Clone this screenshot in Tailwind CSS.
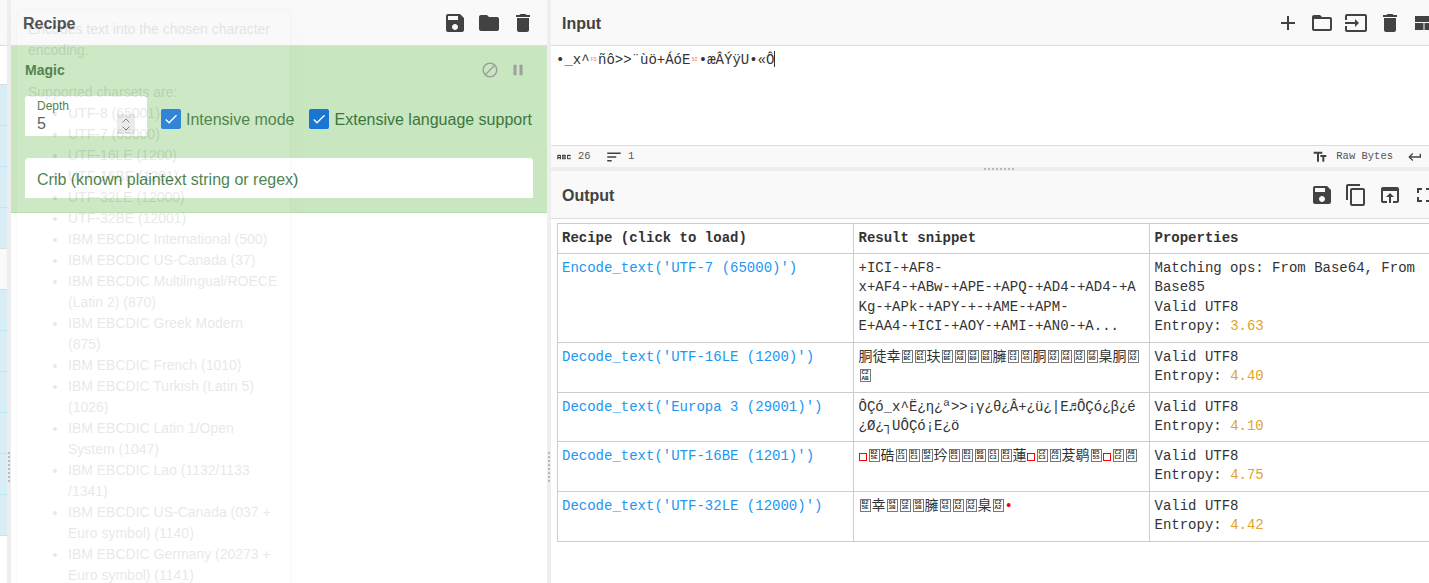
<!DOCTYPE html>
<html lang="en">
<head>
  <meta charset="UTF-8" />
  <title>CyberChef</title>
  <script src="https://cdn.jsdelivr.net/npm/@tailwindcss/browser@4"></script>
</head>
<body class="h-[583px] w-[1429px] overflow-hidden relative bg-white text-[#424242] font-['Liberation_Sans',sans-serif]">

  <div class="flex h-[583px]">

    <!-- operations column, almost fully collapsed -->
    <div class="w-[7px] shrink-0 overflow-hidden">
      <div class="h-[46px] bg-[#f9f9f9] border-b border-[#ddd]"></div>
      <div class="h-[39px] bg-white border-b border-[#ddd]"></div>
      <div class="h-[41px] bg-[#d9edf7] border-b border-[#bce8f1]"></div>
      <div class="h-[41px] bg-[#d9edf7] border-b border-[#bce8f1]"></div>
      <div class="h-[41px] bg-[#d9edf7] border-b border-[#bce8f1]"></div>
      <div class="h-[41px] bg-[#d9edf7] border-b border-[#ddd]"></div>
      <div class="h-[41px] bg-[#f9f9f9] border-b border-[#ddd]"></div>
      <div class="h-[41px] bg-[#d9edf7] border-b border-[#bce8f1]"></div>
      <div class="h-[41px] bg-[#d9edf7] border-b border-[#bce8f1]"></div>
      <div class="h-[41px] bg-[#d9edf7] border-b border-[#bce8f1]"></div>
      <div class="h-[41px] bg-[#d9edf7] border-b border-[#bce8f1]"></div>
      <div class="h-[41px] bg-[#d9edf7] border-b border-[#bce8f1]"></div>
      <div class="h-[41px] bg-[#d9edf7] border-b border-[#bce8f1]"></div>
    </div>

    <div class="w-[4px] shrink-0 bg-[#eeeeee] flex items-start justify-center pt-[452px]">
      <div class="w-[2px] h-[30px] bg-[repeating-linear-gradient(180deg,#bbb_0,#bbb_2px,transparent_2px,transparent_4px)]"></div>
    </div>

    <!-- recipe -->
    <div class="w-[536px] shrink-0 flex flex-col">
      <div class="h-[46px] shrink-0 bg-[#f9f9f9] border-b border-[#ddd] flex items-center pl-3 pr-[7px]">
        <span class="text-base font-bold mt-[2px]">Recipe</span>
        <div class="ml-auto flex">
          <button class="w-[34px] flex justify-center"><svg class="w-6 h-6 fill-[#424242]" viewBox="0 0 24 24"><path d="M17 3H5c-1.11 0-2 .9-2 2v14c0 1.1.89 2 2 2h14c1.1 0 2-.9 2-2V7l-4-4zm-5 16c-1.66 0-3-1.34-3-3s1.34-3 3-3 3 1.34 3 3-1.34 3-3 3zm3-10H5V5h10v4z"/></svg></button>
          <button class="w-[34px] flex justify-center"><svg class="w-6 h-6 fill-[#424242]" viewBox="0 0 24 24"><path d="M10 4H4c-1.1 0-1.99.9-1.99 2L2 18c0 1.1.9 2 2 2h16c1.1 0 2-.9 2-2V8c0-1.1-.9-2-2-2h-8l-2-2z"/></svg></button>
          <button class="w-[34px] flex justify-center"><svg class="w-6 h-6 fill-[#424242]" viewBox="0 0 24 24"><path d="M6 19c0 1.1.9 2 2 2h8c1.1 0 2-.9 2-2V7H6v12zM19 4h-3.5l-1-1h-5l-1 1H5v2h14V4z"/></svg></button>
        </div>
      </div>

      <div class="h-[167px] shrink-0 bg-[#c8e6bf] border-b border-[#b5dca8] pl-[14px] pr-[14px] text-[#3c763d]">
        <div class="flex items-center h-[50px] pb-[2px]">
          <span class="text-sm font-bold">Magic</span>
          <div class="ml-auto flex items-center gap-[10px] pr-[6px]">
            <svg class="w-[18px] h-[18px] fill-[#9e9e9e]" viewBox="0 0 24 24"><path d="M12 2C6.48 2 2 6.48 2 12s4.48 10 10 10 10-4.48 10-10S17.52 2 12 2zM4 12c0-4.42 3.58-8 8-8 1.85 0 3.55.63 4.9 1.69L5.69 16.9C4.63 15.55 4 13.85 4 12zm8 8c-1.85 0-3.55-.63-4.9-1.69L18.31 7.1C19.37 8.45 20 10.15 20 12c0 4.42-3.58 8-8 8z"/></svg>
            <svg class="w-[18px] h-[18px] fill-[#9e9e9e]" viewBox="0 0 24 24"><path d="M6 19h4V5H6v14zm8-14v14h4V5h-4z"/></svg>
          </div>
        </div>

        <div class="flex items-center h-[40px]">
          <div class="relative w-[122px] h-[40px] bg-white rounded-t-[3px] pl-3">
            <div class="text-xs leading-none pt-[4px]">Depth</div>
            <div class="text-base leading-none pt-[4px] text-[#495057]">5</div>
            <div class="absolute left-[92px] top-[18px] w-[18px] h-[20px] bg-[#e9e9ed] flex flex-col items-center justify-center gap-[1px]">
              <svg class="w-[10px] h-[7px] stroke-[#777] fill-none" viewBox="0 0 10 7"><path d="M1.5 5.5 5 2l3.5 3.5"/></svg>
              <svg class="w-[10px] h-[7px] stroke-[#777] fill-none" viewBox="0 0 10 7"><path d="M1.5 1.5 5 5l3.5-3.5"/></svg>
            </div>
          </div>
          <div class="ml-[14px] mt-[6px] w-5 h-5 rounded-[2px] bg-[#1976d2] flex items-center justify-center">
            <svg class="w-4 h-4 fill-white" viewBox="0 0 24 24"><path d="M9 16.2 4.8 12l-1.4 1.4L9 19 21 7l-1.4-1.4z"/></svg>
          </div>
          <span class="ml-[5px] mt-[7px] text-base">Intensive mode</span>
          <div class="ml-[14px] mt-[6px] w-5 h-5 rounded-[2px] bg-[#1976d2] flex items-center justify-center">
            <svg class="w-4 h-4 fill-white" viewBox="0 0 24 24"><path d="M9 16.2 4.8 12l-1.4 1.4L9 19 21 7l-1.4-1.4z"/></svg>
          </div>
          <span class="ml-[6px] mt-[7px] text-base">Extensive language support</span>
        </div>

        <div class="mt-[22px] h-[40px] bg-white rounded-t-[4px] pl-3 pt-[3px] flex items-center text-base">Crib (known plaintext string or regex)</div>
      </div>

      <div class="flex-1 bg-white"></div>
    </div>

    <div class="w-[4px] shrink-0 bg-[#eeeeee] flex items-start justify-center pt-[452px]">
      <div class="w-[2px] h-[30px] bg-[repeating-linear-gradient(180deg,#bbb_0,#bbb_2px,transparent_2px,transparent_4px)]"></div>
    </div>

    <!-- input / output -->
    <div class="flex-1 min-w-0 flex flex-col overflow-hidden">
      <div class="h-[46px] shrink-0 bg-[#f9f9f9] border-b border-[#ddd] flex items-center pl-[11px]">
        <span class="text-base font-bold mt-[2px]">Input</span>
        <div class="ml-auto flex mr-[-12px]">
          <button class="w-[34px] flex justify-center"><svg class="w-6 h-6 fill-[#424242]" viewBox="0 0 24 24"><path d="M19 13h-6v6h-2v-6H5v-2h6V5h2v6h6v2z"/></svg></button>
          <button class="w-[34px] flex justify-center"><svg class="w-6 h-6 fill-[#424242]" viewBox="0 0 24 24"><path d="M20 6h-8l-2-2H4c-1.1 0-1.99.9-1.99 2L2 18c0 1.1.9 2 2 2h16c1.1 0 2-.9 2-2V8c0-1.1-.9-2-2-2zm0 12H4V8h16v10z"/></svg></button>
          <button class="w-[34px] flex justify-center"><svg class="w-6 h-6 fill-[#424242]" viewBox="0 0 24 24"><path d="M21 3.01H3c-1.1 0-2 .9-2 2V9h2V4.99h18v14.03H3V15H1v4.01c0 1.1.9 1.98 2 1.98h18c1.1 0 2-.88 2-1.98v-14c0-1.11-.9-2-2-2zM11 16l4-4-4-4v3H1v2h10v3z"/></svg></button>
          <button class="w-[34px] flex justify-center"><svg class="w-6 h-6 fill-[#424242]" viewBox="0 0 24 24"><path d="M6 19c0 1.1.9 2 2 2h8c1.1 0 2-.9 2-2V7H6v12zM19 4h-3.5l-1-1h-5l-1 1H5v2h14V4z"/></svg></button>
          <button class="w-[34px] flex justify-center"><svg class="w-6 h-6 fill-[#424242]" viewBox="0 0 24 24"><path d="M3 5h18v6H3zM3 12h8.500v7H3zM12.500 12H21v7h-8.500z"/></svg></button>
        </div>
      </div>

      <div class="h-[99px] shrink-0 pl-[5px] pt-[5px] text-sm leading-[19px] font-['Liberation_Mono',monospace] text-[#333] whitespace-pre flex items-start"><span>•_x^</span><span class="inline-block w-[8.4px] text-[5px] text-center text-[#f77]">FS</span><span>ñô&gt;&gt;¨ùö+ÁóE</span><span class="inline-block w-[8.4px] text-[5px] text-center text-[#f77]">SO</span><span>•æÂÝÿU•«Ô</span><span class="w-px h-[16px] bg-[#333]"></span></div>

      <div class="h-[22px] shrink-0 bg-[#f9f9f9] border-t border-[#ddd] flex items-center pl-[4px] text-[10.5px] text-[#555] font-['Liberation_Mono',monospace]">
        <svg class="w-[18px] h-[18px] fill-[#424242]" viewBox="0 0 24 24"><path d="M21 11h-1.500v-.5h-2v3h2V13H21v1c0 .55-.45 1-1 1h-3c-.55 0-1-.45-1-1v-4c0-.55.45-1 1-1h3c.55 0 1 .45 1 1v1zM8 10v5H6.500v-1.500h-2V15H3v-5c0-.55.45-1 1-1h3c.55 0 1 .45 1 1zm-1.500.5h-2V12h2v-1.500zm7 1.500c.55 0 1 .45 1 1v1c0 .55-.45 1-1 1h-4V9h4c.55 0 1 .45 1 1v1c0 .55-.45 1-1 1zM11 10.500v.75h2v-.75h-2zm2 2.250h-2v.75h2v-.75z"/></svg>
        <span class="ml-[5px] w-[13px]">26</span>
        <svg class="ml-[14px] w-[18px] h-[18px] fill-[#424242]" viewBox="0 0 24 24"><path d="M3 18h6v-2H3v2zM3 6v2h18V6H3zm0 7h12v-2H3v2z"/></svg>
        <span class="ml-[5px]">1</span>
        <svg class="ml-auto w-4 h-4 fill-[#424242]" viewBox="0 0 24 24"><path d="M2.500 4v3h5v12h3V7h5V4h-13zm19 5h-9v3h3v7h3v-7h3V9z"/></svg>
        <span class="ml-[8px]">Raw Bytes</span>
        <svg class="ml-[14px] mr-[6px] w-4 h-4 fill-[#424242]" viewBox="0 0 24 24"><path d="M19 7v4H5.830l3.580-3.590L8 6l-6 6 6 6 1.410-1.410L5.830 13H21V7z"/></svg>
      </div>

      <div class="h-[4px] shrink-0 bg-[#eeeeee] flex items-center justify-center">
        <div class="w-[30px] h-[2px] ml-[18px] bg-[repeating-linear-gradient(90deg,#bbb_0,#bbb_2px,transparent_2px,transparent_4px)]"></div>
      </div>

      <div class="h-[48px] shrink-0 bg-[#f9f9f9] border-b border-[#ddd] flex items-center pl-[11px]">
        <span class="text-base font-bold mt-[2px]">Output</span>
        <div class="ml-auto flex mr-[-12px]">
          <button class="w-[34px] flex justify-center"><svg class="w-6 h-6 fill-[#424242]" viewBox="0 0 24 24"><path d="M17 3H5c-1.11 0-2 .9-2 2v14c0 1.1.89 2 2 2h14c1.1 0 2-.9 2-2V7l-4-4zm-5 16c-1.660 0-3-1.340-3-3s1.340-3 3-3 3 1.340 3 3-1.340 3-3 3zm3-10H5V5h10v4z"/></svg></button>
          <button class="w-[34px] flex justify-center"><svg class="w-6 h-6 fill-[#424242]" viewBox="0 0 24 24"><path d="M16 1H4c-1.100 0-2 .9-2 2v14h2V3h12V1zm3 4H8c-1.100 0-2 .9-2 2v14c0 1.100.9 2 2 2h11c1.100 0 2-.9 2-2V7c0-1.100-.9-2-2-2zm0 16H8V7h11v14z"/></svg></button>
          <button class="w-[34px] flex justify-center"><svg class="w-6 h-6 fill-[#424242]" viewBox="0 0 24 24"><path d="M19 4H5c-1.110 0-2 .9-2 2v12c0 1.100.89 2 2 2h4v-2H5V8h14v10h-4v2h4c1.100 0 2-.9 2-2V6c0-1.100-.89-2-2-2zm-7 6l-4 4h3v6h2v-6h3l-4-4z"/></svg></button>
          <button class="w-[34px] flex justify-center"><svg class="w-6 h-6 fill-[#424242]" viewBox="0 0 24 24"><path d="M7 14H5v5h5v-2H7v-3zm-2-4h2V7h3V5H5v5zm12 7h-3v2h5v-5h-2v3zM14 5v2h3v3h2V5h-5z"/></svg></button>
        </div>
      </div>

      <div class="flex-1 pl-[6px] pt-[4px] overflow-hidden">
        <table class="w-[889px] table-fixed border-collapse text-sm leading-[19.5px] text-[#333] font-['Liberation_Mono','Noto_Sans_CJK_SC',monospace] [&_td]:border [&_td]:border-[#ccc] [&_td]:px-[4.500px] [&_td]:py-[5px] [&_td]:align-top [&_td:first-child]:pl-[4px] [&_th]:border [&_th]:border-[#ccc] [&_th]:px-[4.500px] [&_th]:py-[4.500px] [&_th:first-child]:pl-[4px] [&_th]:text-left [&_a]:text-[#2196f3] [&_b]:font-normal [&_b]:text-[#e0a526] [&_i]:inline-block [&_i]:not-italic [&_i]:font-bold [&_i]:w-[11px] [&_i]:h-[13px] [&_i]:mx-px [&_i]:border [&_i]:border-[#777] [&_i]:text-[6px] [&_i]:leading-[5.500px] [&_i]:text-center [&_i]:align-[-2px] [&_i]:overflow-hidden [&_u]:inline-block [&_u]:no-underline [&_u]:w-[8px] [&_u]:h-[8px] [&_u]:mr-[1px] [&_u]:border [&_u]:border-[#f00] [&_u]:align-[-1px]">
          <thead>
            <tr><th>Recipe (click to load)</th><th>Result snippet</th><th>Properties</th></tr>
          </thead>
          <tbody>
            <tr>
              <td><a>Encode_text('UTF-7 (65000)')</a></td>
              <td>+ICI-+AF8-<br>x+AF4-+ABw-+APE-+APQ-+AD4-+AD4-+A<br>Kg-+APk-+APY-+-+AME-+APM-<br>E+AA4-+ICI-+AOY-+AMI-+AN0-+A...</td>
              <td>Matching ops: From Base64, From Base85<br>Valid UTF8<br>Entropy: <b>3.63</b></td>
            </tr>
            <tr>
              <td><a>Decode_text('UTF-16LE (1200)')</a></td>
              <td>胴徒幸<i>C2<br>BC</i><i>C2<br>B1</i>玞<i>C2<br>BE</i><i>C2<br>A8</i><i>C3<br>B9</i><i>C2<br>B8</i>臃<i>C3<br>C3</i><i>C2<br>45</i>胴<i>C2<br>A2</i><i>C2<br>A6</i><i>C2<br>A2</i><i>C2<br>9D</i>臬胴<i>C2<br>A2</i><br><i>C2<br>AB</i></td>
              <td>Valid UTF8<br>Entropy: <b>4.40</b></td>
            </tr>
            <tr class="[&>td]:pb-[4px]!">
              <td><a>Decode_text('Europa 3 (29001)')</a></td>
              <td>ÔÇó_x^Ë¿η¿ª&gt;&gt;¡γ¿θ¿Â+¿ü¿|E♬ÔÇó¿β¿é<br>¿Ø¿┐UÔÇó¡E¿ö</td>
              <td>Valid UTF8<br>Entropy: <b>4.10</b></td>
            </tr>
            <tr>
              <td><a>Decode_text('UTF-16BE (1201)')</a></td>
              <td><u></u><i>B2<br>5E</i>硞<i>1C<br>C3</i><i>B1<br>C3</i><i>B4<br>3E</i>玪<i>B8<br>C3</i><i>B3<br>C3</i><i>B6<br>2B</i><i>C1<br>C3</i><i>B3<br>C3</i>蓮<u></u><i>C2<br>C3</i><i>A6<br>C3</i>茇鹖<i>B5<br>55</i><u></u><i>C2<br>C2</i><i>AB<br>C3</i></td>
              <td>Valid UTF8<br>Entropy: <b>4.75</b></td>
            </tr>
            <tr>
              <td><a>Decode_text('UTF-32LE (12000)')</a></td>
              <td><i>B2<br>5E</i>幸<i>04<br>3B</i><i>C2<br>3E</i><i>06<br>3B</i>臃<i>C3<br>45</i><i>C2<br>A2</i><i>C2<br>A2</i>臬<i>C2<br>A2</i><span class="text-[#f00]">•</span></td>
              <td>Valid UTF8<br>Entropy: <b>4.42</b></td>
            </tr>
          </tbody>
        </table>
      </div>
    </div>
  </div>

  <!-- fading help popover that lies over the recipe panel -->
  <div class="absolute left-[16px] top-[9px] w-[275px] h-[640px] bg-white border border-black/20 rounded-[5px] opacity-[.1] shadow-lg px-[11px] pt-[9px] text-sm leading-[21px] text-[#212529]">
    <p>Encodes text into the chosen character encoding.</p>
    <p class="mt-[21px]">Supported charsets are:</p>
    <ul class="list-disc pl-10">
      <li>UTF-8 (65001)</li>
      <li>UTF-7 (65000)</li>
      <li>UTF-16LE (1200)</li>
      <li>UTF-16BE (1201)</li>
      <li>UTF-32LE (12000)</li>
      <li>UTF-32BE (12001)</li>
      <li>IBM EBCDIC International (500)</li>
      <li>IBM EBCDIC US-Canada (37)</li>
      <li>IBM EBCDIC Multilingual/ROECE (Latin 2) (870)</li>
      <li>IBM EBCDIC Greek Modern (875)</li>
      <li>IBM EBCDIC French (1010)</li>
      <li>IBM EBCDIC Turkish (Latin 5) (1026)</li>
      <li>IBM EBCDIC Latin 1/Open System (1047)</li>
      <li>IBM EBCDIC Lao (1132/1133 /1341)</li>
      <li>IBM EBCDIC US-Canada (037 + Euro symbol) (1140)</li>
      <li>IBM EBCDIC Germany (20273 + Euro symbol) (1141)</li>
    </ul>
  </div>

</body>
</html>
